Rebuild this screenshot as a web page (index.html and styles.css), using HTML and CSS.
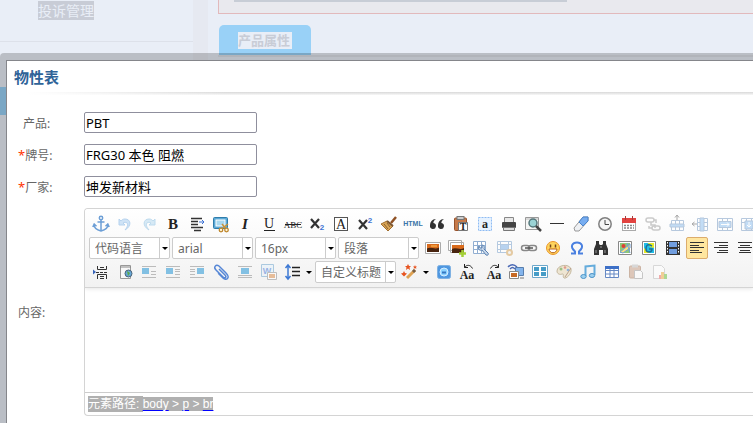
FILE: index.html
```
<!DOCTYPE html>
<html lang="zh-CN">
<head>
  <meta charset="UTF-8">
  <meta name="viewport" content="width=device-width, initial-scale=1.0">
  <title>物性表</title>
  <link rel="stylesheet" href="styles.css">
</head>
<body>
  <div class="page">
    <nav class="sidebar">
      <a href="#" class="side-item"><span>投诉管理</span></a>
      <a href="#" class="side-item active" aria-label="产品管理"></a>
    </nav>
    <main class="main">
      <div class="notice"><div class="notice-bar"></div></div>
      <div class="tabs">
        <button class="tab"><span>产品属性</span></button>
      </div>
    </main>
  </div>

  <div class="dialog-frame">
    <div class="dialog">
      <h2>物性表</h2>
      <form class="form">
        <label class="indent" for="product">产品:</label>
        <input type="text" id="product" value="PBT">

        <label for="grade"><span class="star">*</span>牌号:</label>
        <input type="text" id="grade" value="FRG30 本色 阻燃">

        <label for="maker"><span class="star">*</span>厂家:</label>
        <input type="text" id="maker" value="坤发新材料">

        <label for="content">内容:</label>
        <div class="editor">
          <div class="toolbar">
            <div class="tool-row">
              <button type="button" title="锚点"><svg viewBox="0 0 20 20" fill="none" stroke="#6d9fd6" stroke-width="1.5"><circle cx="10" cy="4" r="1.7"/><path d="M10 6v11M6.500 8h7M3 10.500c0 4 3 5.500 7 6.500 4-1 7-2.500 7-6.500M1.800 13l1.400-3 2.300 2.200M18.200 13l-1.400-3-2.300 2.200"/></svg></button>
              <button type="button" title="撤销"><svg viewBox="0 0 20 20"><path d="M4 5v6h6L8 9c4-2 7 1 2 7 7-4 6-11 0-11-2 0-3 .7-4 2z" fill="#cfe3f6" stroke="#b5d2ee"/></svg></button>
              <button type="button" title="重做"><svg viewBox="0 0 20 20"><path d="M16 5v6h-6l2-2c-4-2-7 1-2 7-7-4-6-11 0-11 2 0 3 .7 4 2z" fill="#d6e9f5" stroke="#bddaee"/></svg></button>
              <button type="button" title="加粗"><svg viewBox="0 0 20 20"><text x="10" y="15" class="glyph serif" font-size="15">B</text></svg></button>
              <button type="button" title="首行缩进"><svg viewBox="0 0 20 20" stroke="#333"><path d="M4 4.500h11M4 7.500h7M4 10.500h7M4 13.500h12M7 16.500h7" stroke-width="1.500"/><path d="M12 8h5m-2-2 2 2-2 2" stroke="#3c71d3" fill="none"/></svg></button>
              <button type="button" title="截图"><svg viewBox="0 0 20 20"><rect x="2.500" y="3.500" width="14" height="11" rx="1" fill="#5aa9d6" stroke="#2f7cab"/><rect x="5" y="6" width="9" height="6" fill="#a9d8ef" stroke="#fff"/><path d="m9 16 8-6m-6 0 5 6" stroke="#c89239" stroke-width="1.500"/><g fill="#fff6d8" stroke="#bf872e" stroke-width="1.300"><circle cx="10" cy="16" r="1.800"/><circle cx="15.500" cy="16" r="1.800"/></g></svg></button>
              <button type="button" title="斜体"><svg viewBox="0 0 20 20"><text x="10" y="15" class="glyph serif" font-size="15" font-style="italic">I</text></svg></button>
              <button type="button" title="下划线"><svg viewBox="0 0 20 20"><text x="10" y="14" class="glyph serif thin" font-size="14">U</text><path d="M5 16.500h11" stroke="#222"/></svg></button>
              <button type="button" title="删除线"><svg viewBox="0 0 20 20"><text x="10" y="14" class="glyph serif thin" font-size="9">ABC</text><path d="M2 10.500h16" stroke="#222"/></svg></button>
              <button type="button" title="下标"><svg viewBox="0 0 20 20"><path d="m4 5 8 9m0-9-8 9" stroke="#333" stroke-width="2.200"/><text x="15" y="16" class="glyph blue" font-size="8">2</text></svg></button>
              <button type="button" title="字符边框"><svg viewBox="0 0 20 20"><rect x="3.500" y="3.500" width="13" height="13" fill="#fff" stroke="#555"/><text x="10" y="15" class="glyph serif thin" font-size="14">A</text></svg></button>
              <button type="button" title="上标"><svg viewBox="0 0 20 20"><path d="m4 6 8 9m0-9-8 9" stroke="#333" stroke-width="2.200"/><text x="15" y="9" class="glyph blue" font-size="8">2</text></svg></button>
              <button type="button" title="清除格式"><svg viewBox="0 0 20 20"><path d="m17 3-5 6" stroke="#8f5124" stroke-width="2.500"/><path d="M8 7 2 10l7 7 5-5z" fill="#d8a456" stroke="#a36f2e"/><path d="m8 7 6 5" stroke="#7c5734" stroke-width="2"/><path d="m5 10 4 5m-1-6 3 4" stroke="#8c632e"/></svg></button>
              <button type="button" title="源代码"><svg viewBox="0 0 20 20"><text x="10" y="12" class="glyph html" font-size="7">HTML</text></svg></button>
              <button type="button" title="引用"><svg viewBox="0 0 20 20" fill="#333"><path d="M9 5C5 5 3 8 3 11.500A3 3 0 1 0 6.500 9C6 8 7 6.500 9 5zM17 5c-4 0-6 3-6 6.500A3 3 0 1 0 14.500 9c-.5-1 .5-2.500 2.500-4z"/></svg></button>
              <button type="button" title="纯文本粘贴"><svg viewBox="0 0 20 20"><rect x="3.500" y="4" width="12" height="12.500" rx="1" fill="#c67a4a" stroke="#98532c"/><rect x="6" y="2.500" width="7" height="3" fill="#ccc" stroke="#777"/><path d="M7.500 8.500h9v8h-9z" fill="#fff" stroke="#777"/><text x="12" y="16" class="glyph serif" font-size="10">T</text></svg></button>
              <button type="button" title="全选"><svg viewBox="0 0 20 20"><rect x="3.500" y="3.500" width="13" height="13" fill="#e6f2ff" stroke="#8dbbf3" stroke-dasharray="2 1"/><text x="10" y="14" class="glyph serif" font-size="12">a</text></svg></button>
              <button type="button" title="打印"><svg viewBox="0 0 20 20"><path d="M5.500 3.500h9V9h-9z" fill="#e8e8e8" stroke="#888"/><rect x="3" y="8" width="14" height="6" rx="1" fill="#444"/><path d="M4.500 13.500h11v3h-11z" fill="#ddd" stroke="#777"/></svg></button>
              <button type="button" title="预览"><svg viewBox="0 0 20 20"><path d="M2.500 3.500h13v12h-13z" fill="#f5f6f5" stroke="#999"/><path d="M3 5h12" stroke="#bbb"/><circle cx="10" cy="9" r="4" fill="#9bd3d5" stroke="#55777b" stroke-width="1.500"/><path d="m13 12 5 5" stroke="#444" stroke-width="2.500"/></svg></button>
              <button type="button" title="分隔线"><svg viewBox="0 0 20 20"><path d="M3 9.500h14" stroke="#333"/></svg></button>
              <button type="button" title="橡皮擦"><svg viewBox="0 0 20 20"><path d="m3 14 9-11h5v4L8 17H4z" fill="#eef0f3" stroke="#999"/><path d="m8 8 4-5h5v4l-5 5z" fill="#78adf0" stroke="#4b85cc"/></svg></button>
              <button type="button" title="时间"><svg viewBox="0 0 20 20" fill="none"><circle cx="10" cy="10" r="6.200" fill="#f5f5f5" stroke="#808080" stroke-width="1.500"/><path d="M10 6v4.500h4" stroke="#444"/></svg></button>
              <button type="button" title="日期"><svg viewBox="0 0 20 20"><rect x="3.500" y="4.500" width="13" height="12" fill="#fff" stroke="#aaa"/><path d="M3 4h14v5H3z" fill="#e24340"/><path d="M6.500 2v4m7-4v4" stroke="#a93a3a"/><path d="M5 11.500h10M5 14h10" stroke="#888" stroke-width="1.500" stroke-dasharray="2 1"/></svg></button>
              <button type="button" title="取消链接" class="off"><svg viewBox="0 0 20 20" fill="none" stroke="#999" stroke-width="1.500"><rect x="3" y="4" width="8" height="4" rx="2"/><path d="M8 8v3h4v3"/><rect x="9" y="12" width="8" height="4" rx="2"/><path d="M11 6h2v3M9 14H6v-2"/></svg></button>
              <button type="button" title="前插入行" class="off"><svg viewBox="0 0 20 20" fill="#fff" stroke="#7396c0"><path d="M4.500 6.500h12v10h-12zM8.500 7v10m4-10v10"/><path d="M3 10h14v3H3z" fill="#8abef0"/><path d="M10 1v5M8 3.500 10 1l2 2.500" stroke="#555" fill="none"/></svg></button>
              <button type="button" title="前插入列" class="off"><svg viewBox="0 0 20 20" fill="#fff" stroke="#7396c0"><path d="M6.500 4.500h10v12h-10zM6 8.500h11m-11 4h11"/><path d="M9 4h4v13H9z" fill="#8abef0"/><path d="M1 10h5M3.500 8 1 10l2.500 2" stroke="#555" fill="none"/></svg></button>
              <button type="button" title="右合并单元格" class="off"><svg viewBox="0 0 20 20" fill="#fff" stroke="#7396c0"><path d="M2.500 4.500h15v12h-15zM7.500 4v13m5-13v13"/><path d="M4 7.500h12v6H4z" fill="#8abef0"/><path d="M6 10.500h8m-2-2 2 2-2 2" stroke="#fff" fill="none"/></svg></button>
              <button type="button" title="下合并单元格" class="off"><svg viewBox="0 0 20 20" fill="#fff" stroke="#7396c0"><path d="M2.500 4.500h15v12h-15zM2 8.500h16M7.500 4v13m5-13v13"/><path d="M6 7h8v8H6z" fill="#8abef0"/><path d="M10 8v5m-2-2 2 2 2-2" stroke="#fff" fill="none"/></svg></button>
            </div>

            <div class="tool-row">
              <span class="combo"><select aria-label="代码语言"><option>代码语言</option></select></span>
              <span class="combo"><select aria-label="字体"><option>arial</option></select></span>
              <span class="combo"><select aria-label="字号"><option>16px</option></select></span>
              <span class="combo"><select aria-label="段落格式"><option>段落</option></select></span>
              <button type="button" title="图片"><svg viewBox="0 0 20 20"><path d="M2.500 4.500h15v11h-15z" fill="#fff" stroke="#aaa"/><path d="M4 6h12v8H4z" fill="#d96b1c"/><path d="M4 10.500c4-2 8 1.500 12-1V14H4z" fill="#48240f"/><path d="M8 8h6" stroke="#ffc75b"/></svg></button>
              <button type="button" title="多图上传"><svg viewBox="0 0 20 20"><path d="M1.500 2.500h13v10h-13zM3.500 4.500h13v10h-13z" fill="#fff" stroke="#aaa"/><path d="M5 7h12v8H5z" fill="#d96b1c"/><path d="M5 11c4-2 8 1.500 12-1v5H5z" fill="#48240f"/><path d="M15.500 12v7M12 15.500h7" stroke="#a4cf36" stroke-width="2.500"/></svg></button>
              <button type="button" title="表格属性"><svg viewBox="0 0 20 20"><path d="M2.500 3.500h12v12h-12zM3 7.500h11m-11 4h11M6.500 4v11m4-11v11" fill="#fff" stroke="#91aed1"/><path d="M8 8c-2 3 1 5 3 4l4 5c2 1 3-1 2-2l-4-4c1-2 0-4-2-4v3H9z" fill="#c7d7eb" stroke="#5c82b0"/></svg></button>
              <button type="button" title="单元格属性" class="off"><svg viewBox="0 0 20 20"><path d="M2.500 3.500h14v11h-14zM2 6.500h15M2 11.500h15M5.500 3v12m8-12v12" fill="#fff" stroke="#719ac7"/><path d="M6 7h7v4H6z" fill="#76ace5"/><circle cx="14.500" cy="14.500" r="2.500" fill="#eee" stroke="#d09b4c" stroke-width="2"/></svg></button>
              <button type="button" title="超链接"><svg viewBox="0 0 20 20" fill="none" stroke="#888" stroke-width="1.500"><rect x="2.500" y="7.500" width="8" height="5" rx="2.500"/><rect x="9.500" y="7.500" width="8" height="5" rx="2.500"/><path d="M6 10h8" stroke="#555"/></svg></button>
              <button type="button" title="表情"><svg viewBox="0 0 20 20"><circle cx="10" cy="10" r="6.500" fill="#ffd45c" stroke="#e9962c"/><path d="M7.500 6.500v3m5-3v3" stroke="#754519" stroke-width="1.500"/><path d="M6 11h8c-.5 5-7.500 5-8 0z" fill="#fff" stroke="#b9611c"/></svg></button>
              <button type="button" title="特殊字符"><svg viewBox="0 0 20 20"><path d="M4 15.500h4v-2C2 8 6 4.500 10 4.500s8 3.500 2 9v2h4" fill="none" stroke="#4a80e0" stroke-width="2"/></svg></button>
              <button type="button" title="查询替换"><svg viewBox="0 0 20 20" fill="#333"><path d="M5 3h3v3l1 1h2l1-1V3h3v3l2 5v6h-5v-5H8v5H3v-6l2-5z"/><path d="M5 12v3m9-3v3M9 9h2" stroke="#999"/></svg></button>
              <button type="button" title="谷歌地图"><svg viewBox="0 0 20 20"><path d="M3.500 3.500h13v13h-13z" fill="#fff" stroke="#888"/><path d="M5 5h10v10H5z" fill="#8cc878"/><path d="m5 14 10-8v4l-7 5zM12 5l3 10" fill="#f9e37d" stroke="#729ed8"/><circle cx="8.500" cy="8" r="2" fill="#df4033"/></svg></button>
              <button type="button" title="百度地图"><svg viewBox="0 0 20 20"><path d="M3.500 3.500h13v13h-13z" fill="#fff" stroke="#888"/><path d="M5 5h10v10H5z" fill="#20bee8"/><path d="M9 5h6v5l-4-1zM5 10l6 5H5z" fill="#e9eb25"/><path d="M13 8c-5-3-6 0-6 3 0 4 6 4 6 0h-3" fill="none" stroke="#1b6f99" stroke-width="1.500"/></svg></button>
              <button type="button" title="视频"><svg viewBox="0 0 20 20"><path d="M3 3h14v14H3z" fill="#333"/><path d="M6 4h8v5H6zM6 11h8v5H6z" fill="#719edf"/><path d="M4.500 4v12m11-12v12" stroke="#fff" stroke-dasharray="1.500 1.500"/></svg></button>
              <button type="button" title="居左对齐" class="checked"><svg viewBox="0 0 20 20" stroke="#333"><path d="M3 4.500h14M3 7.500h9M3 9.500h14M3 12.500h9M3 14.500h12"/></svg></button>
              <button type="button" title="居右对齐"><svg viewBox="0 0 20 20" stroke="#333"><path d="M3 4.500h14M8 7.500h9M3 9.500h14M8 12.500h9M6 14.500h11"/></svg></button>
              <button type="button" title="居中对齐"><svg viewBox="0 0 20 20" stroke="#333"><path d="M3 4.500h14M5 7.500h10M3 9.500h14M5 12.500h10M4 14.500h12"/></svg></button>
            </div>

            <div class="tool-row">
              <button type="button" title="分页"><svg viewBox="0 0 20 20" fill="none" stroke="#333"><path d="M6.500 4v3.500h9V4M6.500 17v-4.500h9V17M5 10.500h3m1 0h3m1 0h3M9 5.500h4m-4 9h4m-4 2h4"/><path d="m2 7.500 3 2.500-3 2.500z" fill="#3764ba" stroke="none"/></svg></button>
              <button type="button" title="模板"><svg viewBox="0 0 20 20"><path d="M5.500 3.500h10v13h-10z" fill="#f8f8f8" stroke="#999"/><path d="M5 5h11" stroke="#888"/><circle cx="13.500" cy="11.500" r="3.500" fill="#67a8d9" stroke="#4b6377"/><path d="m12 9 3 2-2 3z" fill="#5aa946"/></svg></button>
              <button type="button" title="左浮动"><svg viewBox="0 0 20 20"><path d="M3 6h7v6H3z" fill="#82c0e3"/><path d="M3 4.500h14M12 9.500h5M12 12.500h5M3 15.500h14" stroke="#bbb"/></svg></button>
              <button type="button" title="左环绕"><svg viewBox="0 0 20 20"><path d="M3 6h7v6H3z" fill="#82c0e3"/><path d="M3 4.500h14M12 7.500h5M12 9.500h5M12 12.500h5M3 15.500h14" stroke="#bbb"/></svg></button>
              <button type="button" title="右环绕"><svg viewBox="0 0 20 20"><path d="M10 6h7v6h-7z" fill="#82c0e3"/><path d="M3 4.500h14M3 7.500h5M3 9.500h5M3 12.500h5M3 15.500h14" stroke="#bbb"/></svg></button>
              <button type="button" title="附件"><svg viewBox="0 0 20 20"><path d="m8 7 6 6c2 2 0 4-2 2L5 8c-3-3 0-6 3-4l7 7c5 5 0 8-3 5L7 11" fill="none" stroke="#5586d6" stroke-width="1.500"/></svg></button>
              <button type="button" title="居中"><svg viewBox="0 0 20 20"><path d="M6 6h8v6H6z" fill="#82c0e3"/><path d="M3 4.500h14M3 13.500h14M3 15.500h14" stroke="#bbb"/></svg></button>
              <button type="button" title="图片转存" class="off"><svg viewBox="0 0 20 20"><path d="M2.500 2.500h12v12h-12z" fill="#e5f2fb" stroke="#649fcb"/><text x="8" y="12" class="glyph blue" font-size="9">W</text><path d="M8.500 10.500h9v7h-9z" fill="#fff" stroke="#888"/><path d="M10 12h6v4h-6z" fill="#da8741"/></svg></button>
              <button type="button" title="行间距" class="split"><svg viewBox="0 0 20 20"><path d="M5 3v14M2.500 6 5 3l2.500 3M2.500 14 5 17l2.500-3" fill="none" stroke="#3e79d4" stroke-width="1.500"/><path d="M9 5.500h8M9 9.500h8M9 13.500h8" stroke="#222" stroke-width="1.500"/></svg></button>
              <span class="combo"><select aria-label="自定义标题"><option>自定义标题</option></select></span>
              <button type="button" title="自动排版" class="split"><svg viewBox="0 0 20 20"><path d="m7 16 8-8" stroke="#dfa252" stroke-width="3"/><path d="m13 10 2-2" stroke="#745d45" stroke-width="3"/><path d="m4 9 1 2 2 .4L5.500 13 4 14.500 2.500 13 1 11.500l2-.5zM8 2l1 2h2L9.500 5.500 10 8 8 6.500 6 8l.5-2.500L5 4h2zM15 3l.6 1.400H17L16 5.500l.3 1.500L15 6l-1.300 1 .3-1.500-1-1.100h1.400z" fill="#e75420"/></svg></button>
              <button type="button" title="百度应用"><svg viewBox="0 0 20 20"><rect x="3.500" y="3.500" width="13" height="13" rx="2" fill="#4f97e0" stroke="#7fb1e2"/><circle cx="10" cy="10" r="4" fill="#8bd2ff" stroke="#d5edff"/><path d="M8 10.500h4" stroke="#3577c2" stroke-width="2"/></svg></button>
              <button type="button" title="字母大写"><svg viewBox="0 0 20 20"><text x="9" y="17" class="glyph serif" font-size="12">Aa</text><path d="M6.500 5.500c2-3 6-3 8 1M6.500 2v3.500H10" fill="none" stroke="#222"/></svg></button>
              <button type="button" title="字母小写"><svg viewBox="0 0 20 20"><text x="12" y="17" class="glyph serif" font-size="12">Aa</text><path d="M8.500 6.500c2-4 6-4 8-1m0-3.500v3.500H13" fill="none" stroke="#222"/></svg></button>
              <button type="button" title="远程图片"><svg viewBox="0 0 20 20"><path d="M9.500 5.500h8v8h-8z" fill="#83b4ec" stroke="#587ead"/><path d="M2 5c3-3 6-3 9 0M4 7c2-2 3-2 5 0" fill="none" stroke="#4a69b5" stroke-width="1.500"/><path d="M3.500 9.500h9v7h-9z" fill="#fff" stroke="#888"/><path d="M5 11h6v4H5z" fill="#c76924"/><path d="M14 16h4" stroke="#777"/></svg></button>
              <button type="button" title="背景"><svg viewBox="0 0 20 20"><path d="M2.500 3.500h15v12h-15z" fill="#fff" stroke="#6da7ca"/><path d="M4 5h5v4H4zM11 5h5v4h-5zM4 10h5v4H4zM11 10h5v4h-5z" fill="#459cc7"/></svg></button>
              <button type="button" title="涂鸦"><svg viewBox="0 0 20 20"><path d="M3 9c0-6 12-8 14-2 1 5-5 10-7 9-2-2 1-4-2-4-2 1-5 0-5-3z" fill="#eee5d2" stroke="#c4b79d"/><circle cx="7" cy="7" r="1.500" fill="#9cc085"/><circle cx="11" cy="5.500" r="1.300" fill="#e09a8a"/><circle cx="14" cy="8" r="1.300" fill="#8fb3dc"/><path d="m17 6-6 9" stroke="#b9a08a"/></svg></button>
              <button type="button" title="音乐"><svg viewBox="0 0 20 20"><path d="M7.500 14V4.500l9-1V13" fill="none" stroke="#65acdc" stroke-width="2"/><ellipse cx="5.500" cy="14.500" rx="2.700" ry="2" fill="#9dd0ef" stroke="#4d94c8"/><ellipse cx="14" cy="13.500" rx="2.700" ry="2" fill="#9dd0ef" stroke="#4d94c8"/></svg></button>
              <button type="button" title="插入表格"><svg viewBox="0 0 20 20"><path d="M3.500 4.500h13v11h-13zM3 8.500h14M3 12h14M8 5v11m4-11v11" fill="#fff" stroke="#6689c4"/><path d="M3 4h14v3H3z" fill="#3d70c7"/></svg></button>
              <button type="button" title="从草稿箱加载" class="off"><svg viewBox="0 0 20 20"><rect x="3.500" y="4" width="11" height="12" rx="1" fill="#c79b80" stroke="#a47555"/><path d="M6 2.500h6v3H6z" fill="#bbb"/><path d="M8.500 8.500h6l2 2v6h-8z" fill="#fff" stroke="#999"/></svg></button>
              <button type="button" title="图表" class="off"><svg viewBox="0 0 20 20"><path d="M3.500 3.500h8l3 3v10h-11z" fill="#fff" stroke="#bbb"/><path d="M9 13h2v4H9z" fill="#e66"/><path d="M11 10h3v7h-3z" fill="#eda93a"/><path d="M14 12h3v5h-3z" fill="#6b3"/></svg></button>
            </div>
          </div>
          <textarea id="content"></textarea>
          <div class="status"><span>元素路径: </span><span class="path"><a href="#">body</a> &gt; <a href="#">p</a> &gt; <a href="#">br</a></span></div>
        </div>
      </form>
    </div>
  </div>
</body>
</html>
```
FILE: styles.css
```
* {
  box-sizing: border-box;
  margin: 0;
  padding: 0;
}

body {
  height: 100vh;
  overflow: hidden;
  position: relative;
  background: #e6e9f1;
  color: #666;
  font-family: "Noto Sans", "Noto Sans CJK SC", sans-serif;
  font-size: 12px;
}

button,
input,
select,
textarea {
  font-family: inherit;
}

/* page behind the dialog */
.page {
  display: flex;
  gap: 15px;
  height: 100%;
}

.sidebar {
  width: 193px;
  background: #e9eef7;
}

.side-item {
  display: block;
  height: 42px;
  padding: 1px 0 0 38px;
  border-bottom: 1px solid #dde1ea;
  font-size: 14px;
  line-height: 19px;
  color: #e9eef7;
  text-decoration: none;
}

.side-item span {
  display: inline-block;
  background: #c8ccd6;
}

.side-item.active {
  height: 28px;
  margin-top: 45px;
  border: none;
  background: #99d1f7;
}

.main {
  flex: 1;
  padding-left: 10px;
  background: #e9eef7;
}

.notice {
  height: 14px;
  padding-left: 15px;
  background: #e9e9ee;
  border: solid #e2b9bc;
  border-width: 0 0 1px 1px;
}

.notice-bar {
  width: 333px;
  height: 2px;
  background: #c8cdd6;
}

.tabs {
  margin-top: 11px;
  padding-left: 1px;
  border-bottom: 2px solid #dee1e9;
}

.tab {
  display: block;
  width: 92px;
  height: 30px;
  border: none;
  border-radius: 5px 5px 0 0;
  background: #99d1f7;
  color: #c8ccd6;
  font-size: 13px;
  font-weight: bold;
}

.tab span {
  display: inline-block;
  padding-right: 2px;
  line-height: 17px;
  background: #e9eef7;
}

/* dialog */
.dialog-frame {
  position: absolute;
  top: 53px;
  bottom: 0;
  left: 0;
  right: 0;
  padding: 7px 0 0 6px;
  border-radius: 4px 0 0 0;
  background: rgba(0, 0, 0, 0.2);
}

.dialog {
  height: 100%;
  overflow: hidden;
  border: solid #85868b;
  border-width: 1px 0 0 1px;
  background: #fff;
}

.dialog h2 {
  height: 34px;
  padding-left: 7px;
  font-size: 15px;
  line-height: 32px;
  color: #2f6398;
  background: linear-gradient(to right, #fff 20px, rgba(255, 255, 255, 0) 220px),
    linear-gradient(#d8d8d8, #f8f8f8) bottom / 100% 3px no-repeat;
}

.form {
  display: grid;
  grid-template-columns: 66px minmax(0, 1fr);
  gap: 11px 0;
  align-items: center;
  padding: 17px 0 0 11px;
}

.form .indent {
  padding-left: 5px;
}

.star {
  color: #f30;
  font-size: 13px;
}

.form input {
  width: 173px;
  height: 21px;
  padding: 0 1px;
  border: 1px solid #8f8f9d;
  border-radius: 2px;
  color: #000;
  font-size: 13px;
}

/* editor */
.editor {
  border: 1px solid #d4d4d4;
  border-right: none;
  border-radius: 4px 0 0 4px;
  overflow: hidden;
}

.toolbar {
  position: relative;
  padding: 3px 0 3px 4px;
  border-bottom: 1px solid #d4d4d4;
  background: linear-gradient(#fff, #f2f2f2);
  box-shadow: 0 1px 4px rgba(0, 0, 0, 0.1);
}

.tool-row {
  display: flex;
  align-items: center;
  height: 24px;
}

.tool-row button {
  flex: none;
  display: flex;
  align-items: center;
  width: 22px;
  height: 22px;
  margin: 0 1px;
  border: 1px solid transparent;
  background: none;
}

.tool-row svg {
  flex: none;
  width: 20px;
  height: 20px;
}

.tool-row .off svg {
  opacity: 0.5;
}

.tool-row .checked {
  border-color: #dcac6c;
  border-radius: 2px;
  background: #ffe69f;
}

.tool-row .split {
  width: 32px;
}

.split::after,
.combo::after {
  content: "";
  border: 3px solid transparent;
  border-top-color: #000;
  border-bottom: none;
}

.split::after {
  margin-left: 3px;
}

.combo {
  position: relative;
  flex: none;
  margin-right: 2px;
}

.combo::after {
  position: absolute;
  right: 2px;
  top: 10px;
}

.combo select {
  display: block;
  appearance: none;
  width: 81px;
  height: 22px;
  padding: 0 0 0 5px;
  border: 1px solid #ccc;
  border-radius: 2px;
  background: linear-gradient(#ccc, #ccc) right 9px top / 1px 100% no-repeat #fff;
  color: #666;
  font-size: 12px;
}

.glyph {
  fill: #222;
  font-family: "Liberation Sans", sans-serif;
  font-weight: bold;
  text-anchor: middle;
}

.glyph.serif {
  font-family: "Liberation Serif", serif;
}

.glyph.thin {
  font-weight: normal;
}

.glyph.blue {
  fill: #3c71d3;
}

.glyph.html {
  fill: #3a74a8;
}

.editor textarea {
  display: block;
  width: 100%;
  height: 104px;
  border: none;
  outline: none;
  resize: none;
}

.status {
  height: 23px;
  padding-left: 3px;
  border-top: 1px solid #ccc;
  line-height: 22px;
  font-family: "Liberation Sans", "Noto Sans CJK SC", sans-serif;
  color: #fff;
  white-space: pre;
}

.status span {
  display: inline-block;
  line-height: 16px;
  background: #b0b0b0;
}

.status .path {
  line-height: 14px;
}

.status a {
  color: #fff;
  text-decoration-line: underline;
  text-decoration-color: #0000ff;
  text-decoration-thickness: 1px;
  text-underline-offset: 2px;
}
```
